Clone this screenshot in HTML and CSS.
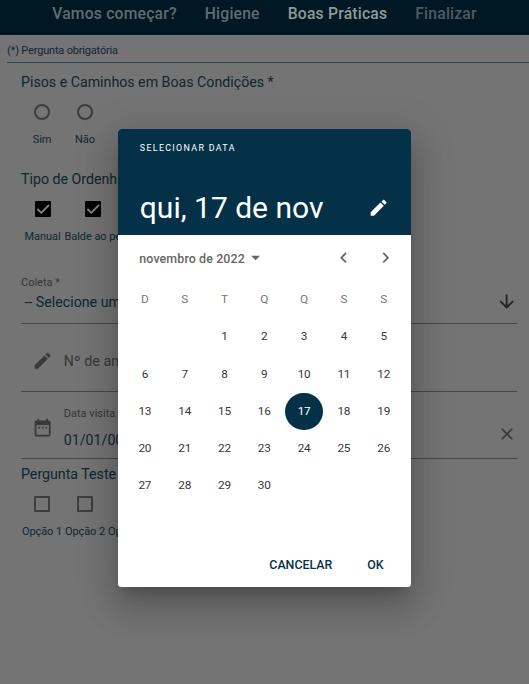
FILE: index.html
```html
<!DOCTYPE html>
<html lang="pt-BR">
<head>
<meta charset="utf-8">
<title>Boas Práticas</title>
<link rel="stylesheet" href="styles.css">
</head>
<body>
<div class="page">
  <nav class="tabs">
    <span class="tab">Vamos começar?</span>
    <span class="tab">Higiene</span>
    <span class="tab active">Boas Práticas</span>
    <span class="tab dim">Finalizar</span>
  </nav>
  <p class="notice">(*) Pergunta obrigatória</p>
  <main class="form">
    <h2 class="question">Pisos e Caminhos em Boas Condições *</h2>
    <div class="choices">
      <div class="choice"><i class="radio"></i><span>Sim</span></div>
      <div class="choice"><i class="radio"></i><span>Não</span></div>
    </div>
    <h2 class="question second">Tipo de Ordenha *</h2>
    <div class="choices milking">
      <div class="choice"><svg class="check" viewBox="3 3 18 18"><rect x="3" y="3" width="18" height="18" rx="1"/><path d="M5.7 12l4.3 4.3 8.8-8.8"/></svg><span>Manual</span></div>
      <div class="choice"><svg class="check" viewBox="3 3 18 18"><rect x="3" y="3" width="18" height="18" rx="1"/><path d="M5.7 12l4.3 4.3 8.8-8.8"/></svg><span>Balde ao pé</span></div>
    </div>
    <div class="field select">
      <div class="field-text"><label>Coleta *</label><span class="value">-- Selecione uma opção --</span></div>
      <svg class="icon arrow" viewBox="0 0 24 24"><path d="M20 12l-1.410-1.410L13 16.170V4h-2v12.170l-5.580-5.590L4 12l8 8 8-8z"/></svg>
    </div>
    <div class="field animals">
      <svg class="icon" viewBox="0 0 24 24"><path d="M3 17.250V21h3.750L17.810 9.940l-3.750-3.750L3 17.250zM20.710 7.040c.39-.39.39-1.020 0-1.410l-2.340-2.340c-.39-.39-1.020-.39-1.410 0l-1.830 1.830 3.750 3.750 1.830-1.830z"/></svg>
      <span class="hint">Nº de animais</span>
    </div>
    <div class="field visit">
      <svg class="icon" viewBox="0 0 24 24"><path fill-rule="evenodd" d="M19 4h-1V2h-2v2H8V2H6v2H5c-1.100 0-2 .9-2 2v14c0 1.100.9 2 2 2h14c1.100 0 2-.9 2-2V6c0-1.100-.9-2-2-2zm0 16H5V9h14v11zM7 11h2v2H7zm4 0h2v2h-2zm4 0h2v2h-2z"/></svg>
      <div class="field-text"><label>Data visita *</label><span class="value">01/01/0001</span></div>
      <svg class="icon close" viewBox="0 0 24 24"><path d="M19 6.410L17.590 5 12 10.590 6.410 5 5 6.410 10.590 12 5 17.590 6.410 19 12 13.410 17.590 19 19 17.590 13.410 12z"/></svg>
    </div>
    <h2 class="question third">Pergunta Teste</h2>
    <div class="choices test">
      <div class="choice"><i class="box"></i><span>Opção 1</span></div>
      <div class="choice"><i class="box"></i><span>Opção 2</span></div>
      <div class="choice"><i class="box"></i><span>Opção 3</span></div>
    </div>
  </main>
</div>
<section class="dialog">
  <header class="dialog-head">
    <div class="overline">SELECIONAR DATA</div>
    <div class="headline"><span>qui, 17 de nov</span>
      <svg class="icon edit" viewBox="0 0 24 24"><path d="M3 17.250V21h3.750L17.810 9.940l-3.750-3.750L3 17.250zM20.710 7.040c.39-.39.39-1.020 0-1.410l-2.340-2.340c-.39-.39-1.020-.39-1.410 0l-1.830 1.830 3.750 3.750 1.830-1.830z"/></svg>
    </div>
  </header>
  <div class="month">
    <span>novembro de 2022</span>
    <svg class="icon drop" viewBox="0 0 24 24"><path d="M7 10l5 5 5-5z"/></svg>
    <svg class="icon prev" viewBox="0 0 24 24"><path d="M15.410 7.410L14 6l-6 6 6 6 1.410-1.410L10.830 12z"/></svg>
    <svg class="icon" viewBox="0 0 24 24"><path d="M10 6L8.590 7.410 13.170 12l-4.580 4.590L10 18l6-6z"/></svg>
  </div>
  <div class="days">
    <b>D</b><b>S</b><b>T</b><b>Q</b><b>Q</b><b>S</b><b>S</b>
    <span class="first">1</span><span>2</span><span>3</span><span>4</span><span>5</span>
    <span>6</span><span>7</span><span>8</span><span>9</span><span>10</span><span>11</span><span>12</span>
    <span>13</span><span>14</span><span>15</span><span>16</span><span class="selected">17</span><span>18</span><span>19</span>
    <span>20</span><span>21</span><span>22</span><span>23</span><span>24</span><span>25</span><span>26</span>
    <span>27</span><span>28</span><span>29</span><span>30</span>
  </div>
  <footer class="actions"><span>CANCELAR</span><span>OK</span></footer>
</section>
</body>
</html>
```
FILE: styles.css
```css
* { box-sizing: border-box; }
body {
  margin: 0;
  height: 684px;
  overflow: hidden;
  background: #747474;
  color: #0e2731;
  font-family: Roboto, sans-serif;
  white-space: nowrap;
}
.tabs {
  display: flex;
  justify-content: center;
  gap: 28px;
  height: 35px;
  background: #001824;
  color: #606c72;
  font-size: 15.700px;
  font-weight: 500;
  line-height: 28px;
  letter-spacing: 0.200px;
}
.tab.active { color: #929899; }
.tab.dim { color: #4f5b62; }
.notice {
  margin: 0 0 0 7px;
  height: 28px;
  border-bottom: 1px solid #31484f;
  font-size: 11px;
  line-height: 31px;
  letter-spacing: -0.180px;
}
.form { padding: 0 12px 0 21px; }
.question {
  margin: 9px 0 0;
  font-size: 14.200px;
  font-weight: 400;
  line-height: 20px;
}
.choices {
  display: flex;
  gap: 4px;
  margin: 12px 0 0 1.500px;
  font-size: 11px;
  letter-spacing: -0.060px;
  line-height: 16px;
}
.choice {
  display: flex;
  flex-direction: column;
  align-items: center;
  gap: 12px;
  width: 39px;
}
.radio, .box { width: 16px; height: 16px; border: 2px solid #3d3d3d; }
.radio { border-radius: 50%; }
.box { border-radius: 1px; }
.check { width: 16px; height: 16px; }
.check path { fill: none; stroke: #858585; stroke-width: 2; }
.question.second { margin-top: 21px; }
.milking { margin: 12px 0 0 3.500px; }
.milking .choice { width: auto; }
.field {
  display: flex;
  align-items: center;
  border-bottom: 1px solid #474747;
}
.icon { width: 21.300px; height: 21.300px; flex: none; fill: #393939; }
.field-text { display: flex; flex-direction: column; flex: 1; }
.field label { font-size: 11px; line-height: 14px; color: #343434; }
.value { font-size: 14.200px; line-height: 20px; }
.select { height: 55px; margin-top: 24px; padding-bottom: 4px; }
.select .value { padding-left: 3.500px; margin-top: 2px; }
.select .arrow { margin-top: 15px; fill: #222; }
.animals { height: 68px; padding: 7px 0 0 10.500px; }
.hint { margin-left: 11px; font-size: 14.200px; color: #373737; letter-spacing: 0.100px; }
.visit { height: 67px; padding-left: 10.500px; }
.visit > .icon:first-child { margin-top: 6px; }
.visit .field-text { margin-left: 11px; padding-top: 6px; }
.visit .value { margin-top: 9px; }
.visit .close { width: 20px; height: 20px; margin-top: 18px; }
.question.third { margin-top: 5px; }
.test { margin-top: 12px; }

.dialog {
  position: absolute;
  left: 118.300px;
  top: 129px;
  width: 292.400px;
  height: 458.300px;
  display: flex;
  flex-direction: column;
  background: #fff;
  border-radius: 3.500px;
  overflow: hidden;
  box-shadow: 0 10px 14px -6px rgba(0,0,0,.2), 0 21px 34px 3px rgba(0,0,0,.14), 0 8px 40px 7px rgba(0,0,0,.12);
}
.dialog-head { height: 106px; padding: 11px 21px 0 21.500px; background: #043148; color: #fff; }
.overline { font-size: 8.900px; line-height: 16px; letter-spacing: 1.330px; }
.headline {
  display: flex;
  align-items: center;
  justify-content: space-between;
  margin-top: 32px;
  font-size: 30px;
  line-height: 40px;
}
.edit { fill: #fff; }
.month {
  display: flex;
  align-items: center;
  height: 46px;
  padding: 0 14px 0 21px;
  color: #666;
  font-size: 12.400px;
  font-weight: 500;
  letter-spacing: 0.130px;
}
.month .icon { fill: #666; }
.prev { margin-left: auto; margin-right: 21.300px; }
.days {
  display: grid;
  grid-template-columns: repeat(7, 39.800px);
  grid-auto-rows: 37.250px;
  padding-left: 6.700px;
  font-size: 11.800px;
  line-height: 37.600px;
  letter-spacing: -0.200px;
  text-align: center;
  color: #383838;
}
.days b { font-weight: 400; color: #777; }
.first { grid-column: 3; }
.selected { width: 37.250px; margin: 0 auto; border-radius: 50%; background: #043148; color: #fff; }
.actions {
  display: flex;
  justify-content: flex-end;
  gap: 35px;
  margin-top: auto;
  padding: 0 27px 12px 0;
  color: #043148;
  font-size: 12.400px;
  font-weight: 500;
  line-height: 20px;
}
```
